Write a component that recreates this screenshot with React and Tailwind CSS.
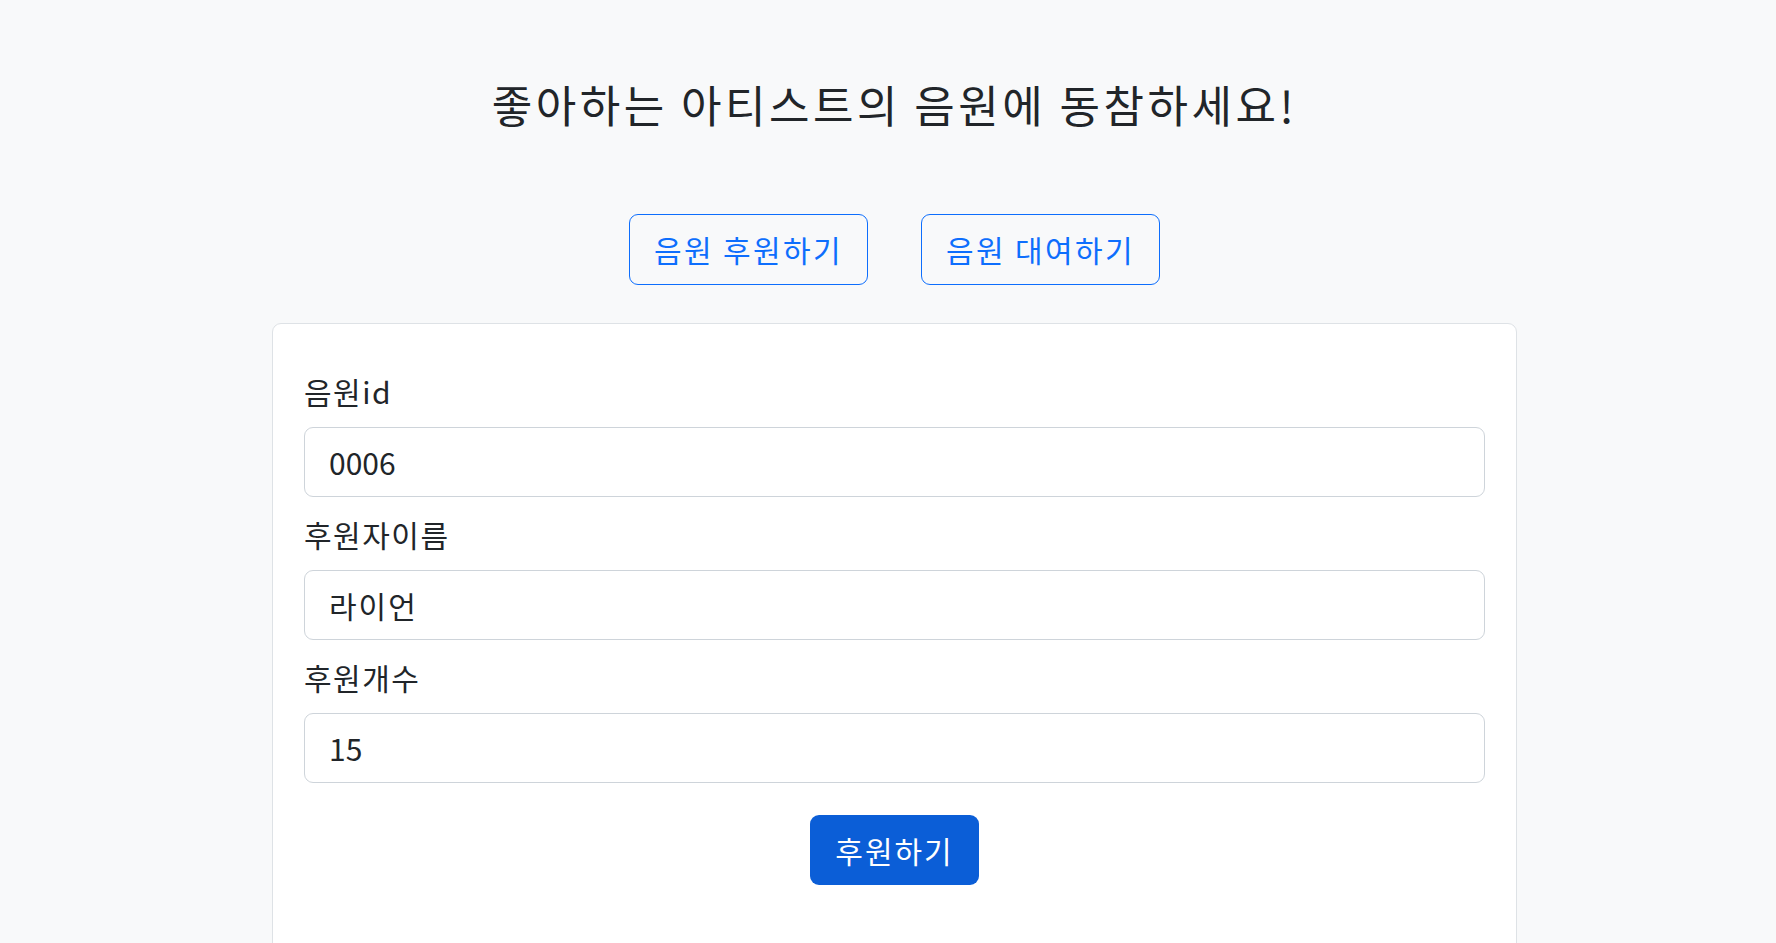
export default function App() {
  const fields = [
    { label: "음원id", value: "0006", numeric: true },
    { label: "후원자이름", value: "라이언" },
    { label: "후원개수", value: "15", numeric: true },
  ];

  return (
    <div className="min-h-screen bg-[#f8f9fa] pl-[13px] font-['Noto_Sans_CJK_KR','Noto_Sans',sans-serif] text-[#212529]">
      <div className="flex flex-col items-center">
        <h1 className="mt-[79px] text-[44px] leading-[50px] font-normal tracking-[3.5px]">
          좋아하는 아티스트의 음원에 동참하세요!
        </h1>

        <div className="mt-[85px] flex gap-[53px]">
          <button className="h-[71px] w-[239px] rounded-[9px] border border-[#0d6efd] text-[30px] tracking-[2.4px] text-[#0d6efd]">
            음원 후원하기
          </button>
          <button className="h-[71px] w-[239px] rounded-[9px] border border-[#0d6efd] text-[30px] tracking-[2.4px] text-[#0d6efd]">
            음원 대여하기
          </button>
        </div>

        <div className="mt-[38px] w-[1245px] rounded-[9px] border border-[#dee2e6] bg-white px-[31px] pt-[45px] pb-[90px]">
          {fields.map((f, i) => (
            <div key={f.label} className={i > 0 ? "mt-[15px]" : ""}>
              <label className="block text-[30px] leading-[45px] tracking-[1.5px]">{f.label}</label>
              <div
                className={
                  "mt-[13px] flex h-[70px] items-center rounded-[9px] border border-[#ced4da] bg-white px-[24px] text-[30px] " +
                  (f.numeric ? "tracking-normal" : "tracking-[2px]")
                }
              >
                {f.value}
              </div>
            </div>
          ))}
          <div className="mt-[32px] flex justify-center">
            <button className="h-[70px] w-[169px] rounded-[9px] bg-[#0b5ed7] text-[30px] tracking-[2px] text-white">
              후원하기
            </button>
          </div>
        </div>
      </div>
    </div>
  );
}
